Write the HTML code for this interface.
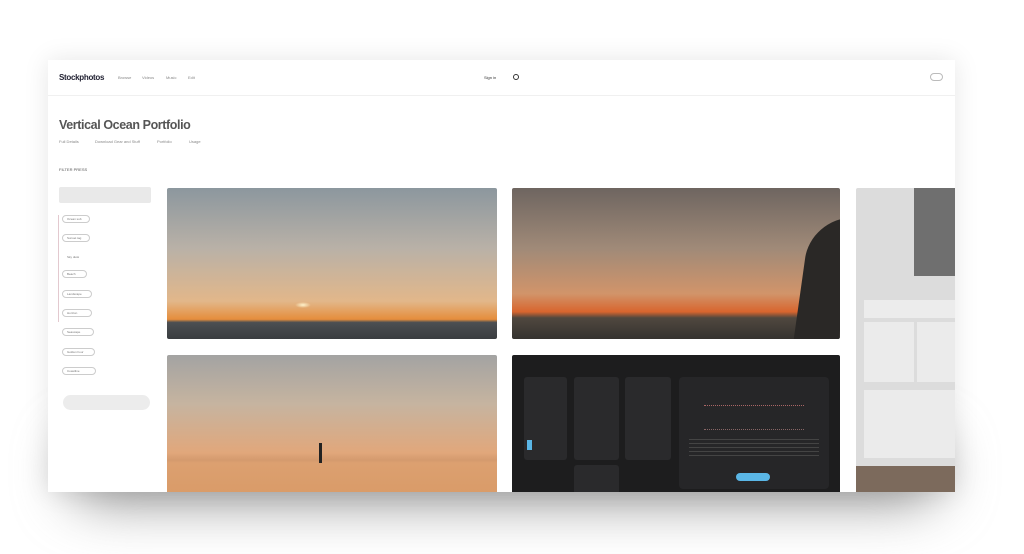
<!DOCTYPE html>
<html><head><style>
*{margin:0;padding:0;box-sizing:border-box}
body{width:1024px;height:554px;overflow:hidden;background:#fff;font-family:"Liberation Sans",sans-serif;position:relative}
.sh{position:absolute;left:70px;top:440px;width:870px;height:60px;background:#8a8a8a;filter:blur(28px);border-radius:30px}
.frame{position:absolute;left:48px;top:60px;width:907px;height:432px;background:#fff;box-shadow:0 0 24px rgba(0,0,0,.10);overflow:hidden}
.a{position:absolute}
.t{position:absolute;font-size:4px;color:#888;white-space:nowrap}
.chip{position:absolute;left:14px;height:8px;border:1px solid #ccc;border-radius:5px;font-size:3px;color:#777;padding:1px 4px;width:28px}
.img{position:absolute;border-radius:2px;overflow:hidden}
</style></head><body>
<div class="sh"></div>
<div class="frame">
 <div class="a" style="left:0;top:35px;width:907px;height:1px;background:#f0f0f0"></div>
 <div class="t" style="left:11px;top:13px;font-size:8px;font-weight:bold;color:#223;letter-spacing:-.3px">Stockphotos</div>
 <div class="t" style="left:70px;top:15px">Browse</div>
 <div class="t" style="left:94px;top:15px">Videos</div>
 <div class="t" style="left:118px;top:15px">Music</div>
 <div class="t" style="left:140px;top:15px">Edit</div>
 <div class="t" style="left:436px;top:15px;color:#333">Sign in</div>
 <div class="a" style="left:465px;top:14px;width:6px;height:6px;border:1.5px solid #333;border-radius:50%"></div>
 <div class="a" style="left:882px;top:13px;width:13px;height:8px;border:1px solid #bbb;border-radius:4px"></div>
 <div class="t" style="left:11px;top:58px;font-size:12.5px;font-weight:bold;color:#555;letter-spacing:-.4px">Vertical Ocean Portfolio</div>
 <div class="t" style="left:11px;top:79px">Full Details</div>
 <div class="t" style="left:47px;top:79px">Download Gear and Stuff</div>
 <div class="t" style="left:109px;top:79px">Portfolio</div>
 <div class="t" style="left:141px;top:79px">Usage</div>
 <div class="t" style="left:11px;top:107px;color:#555">FILTER PRESS</div>
 <div class="a" style="left:11px;top:127px;width:92px;height:16px;background:#e9e9e9;border-radius:2px"></div>
 <div class="a" style="left:10px;top:155px;width:1px;height:107px;background:#e3c9cf"></div>
 <div class="chip" style="top:155px">Ocean sub</div>
 <div class="chip" style="top:174px">Sunset tag</div>
 <div class="chip" style="top:193px;border-color:#fff">Sky dusk</div>
 <div class="chip" style="top:210px;width:25px">Beach</div>
 <div class="chip" style="top:230px;width:30px">Landscape</div>
 <div class="chip" style="top:249px;width:30px">Horizon</div>
 <div class="chip" style="top:268px;width:32px">Seascape</div>
 <div class="chip" style="top:288px;width:33px">Golden hour</div>
 <div class="chip" style="top:307px;width:34px">Coastline</div>
 <div class="a" style="left:15px;top:335px;width:87px;height:15px;background:#ececec;border-radius:8px"></div>
 <div class="img" style="left:119px;top:128px;width:330px;height:151px;background:linear-gradient(#8c979e 0%,#b9b1a7 40%,#e2b78a 75%,#e58d3c 87%,#4c4f52 89%,#3a3d40 100%)">
  <div class="a" style="left:128px;top:114px;width:16px;height:6px;border-radius:50%;background:radial-gradient(#fff3cc,rgba(255,220,150,0) 70%)"></div></div>
 <div class="img" style="left:464px;top:128px;width:328px;height:151px;background:linear-gradient(#6e6560 0%,#a08a78 40%,#d1946a 70%,#d8652e 82%,#50483f 86%,#35332f 100%)">
  <div class="a" style="left:290px;top:30px;width:45px;height:125px;background:#2a2826;border-radius:40px 0 0 0;transform:skewX(-8deg)"></div></div>
 <div class="img" style="left:119px;top:295px;width:330px;height:140px;background:linear-gradient(#a3a3a2 0%,#c6b4a0 35%,#e1a77b 70%,#d49a6e 75%,#dca070 77%,#d99b68 100%)">
  <div class="a" style="left:152px;top:88px;width:3px;height:20px;background:#222"></div></div>
 <div class="img" style="left:464px;top:295px;width:328px;height:140px;background:#1d1d1e">
  <div class="a" style="left:12px;top:22px;width:43px;height:83px;background:#2a2a2c;border-radius:3px"></div>
  <div class="a" style="left:62px;top:22px;width:45px;height:83px;background:#2a2a2c;border-radius:3px"></div>
  <div class="a" style="left:113px;top:22px;width:46px;height:83px;background:#2a2a2c;border-radius:3px"></div>
  <div class="a" style="left:62px;top:110px;width:45px;height:40px;background:#2a2a2c;border-radius:3px"></div>
  <div class="a" style="left:167px;top:22px;width:150px;height:112px;background:#262628;border-radius:4px">
   <div class="a" style="left:25px;top:28px;width:100px;height:25px;border-top:1px dotted #a66;border-bottom:1px dotted #866"></div>
   <div class="a" style="left:10px;top:62px;width:130px;height:20px;background:repeating-linear-gradient(#444 0 1px,transparent 1px 4px)"></div>
   <div class="a" style="left:57px;top:96px;width:34px;height:8px;background:#5ab6e6;border-radius:4px"></div></div>
  <div class="a" style="left:15px;top:85px;width:5px;height:10px;background:#5ab6e6"></div>
 </div>
 <div class="img" style="left:808px;top:128px;width:110px;height:310px;background:#dcdcdc">
  <div class="a" style="left:58px;top:0;width:45px;height:88px;background:#6f6f6f"></div>
  <div class="a" style="left:8px;top:112px;width:100px;height:18px;background:#ececec"></div>
  <div class="a" style="left:8px;top:134px;width:50px;height:60px;background:#ebebeb"></div>
  <div class="a" style="left:61px;top:134px;width:45px;height:60px;background:#ebebeb"></div>
  <div class="a" style="left:8px;top:202px;width:100px;height:68px;background:#ebebeb"></div>
  <div class="a" style="left:0;top:278px;width:110px;height:30px;background:#7c6a5c"></div>
 </div>
</div>
</body></html>
